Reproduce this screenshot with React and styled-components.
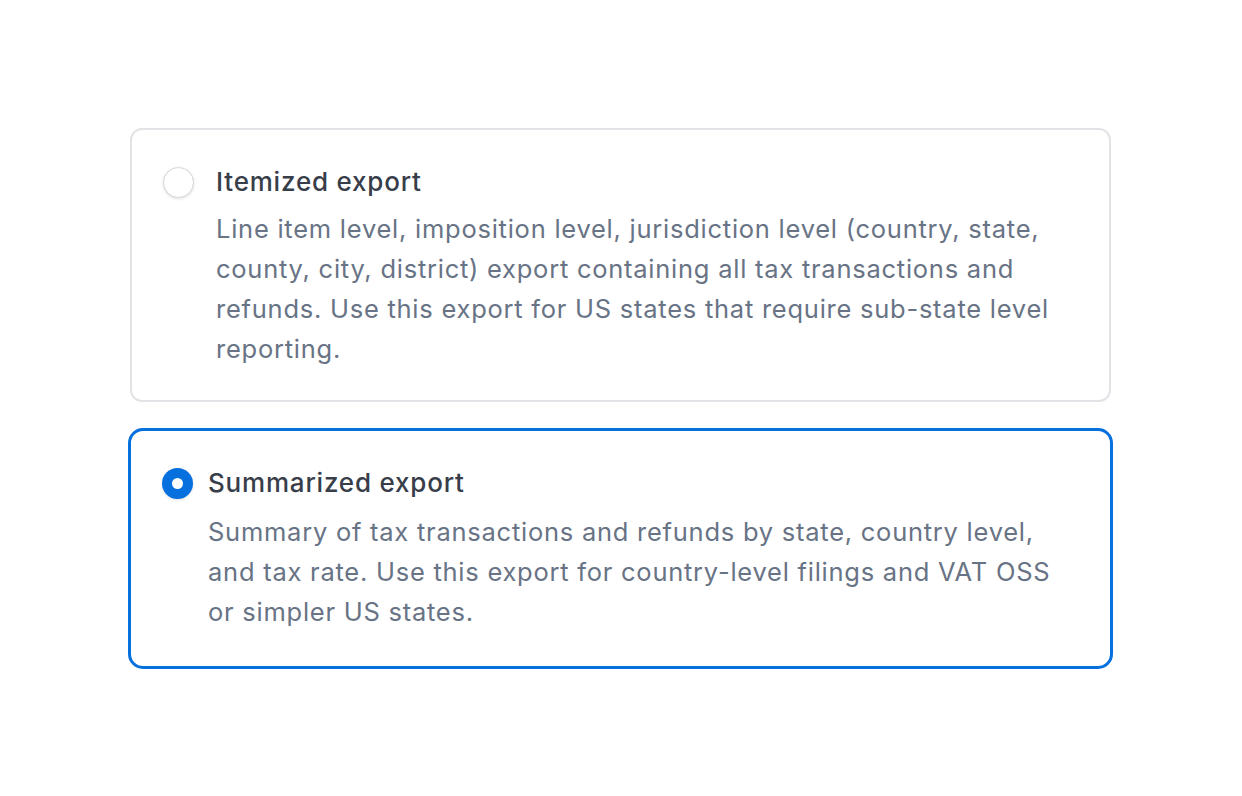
import styled, { createGlobalStyle } from "styled-components";

const Global = createGlobalStyle`
  body {
    margin: 0;
    background: #ffffff;
    font-family: Inter, "Noto Sans", sans-serif;
  }
`;

const Page = styled.main`
  display: flex;
  flex-direction: column;
  gap: 26px;
  padding: 128px 0 0 128px;
  width: 985px;
`;

const Card = styled.label`
  display: flex;
  align-items: flex-start;
  gap: ${(p) => (p.$selected ? "15px" : "22px")};
  margin: ${(p) => (p.$selected ? "0" : "0 2px")};
  padding: ${(p) => (p.$selected ? "32px 31px 34px 31px" : "32px 31px 31px 31px")};
  border: ${(p) => (p.$selected ? "3px solid #0570de" : "2px solid #e2e3e6")};
  border-radius: ${(p) => (p.$selected ? "15px" : "12px")};
  cursor: pointer;
`;

const Radio = styled.span`
  flex: none;
  box-sizing: border-box;
  width: 31px;
  height: 31px;
  margin-top: 5px;
  border-radius: 50%;
  display: flex;
  align-items: center;
  justify-content: center;
  background: ${(p) => (p.$checked ? "#0570de" : "#ffffff")};
  border: ${(p) => (p.$checked ? "none" : "1px solid #d5d7dc")};
  box-shadow: 0 1px 3px rgba(0, 0, 0, 0.12);

  &::after {
    content: "";
    display: ${(p) => (p.$checked ? "block" : "none")};
    width: 11px;
    height: 11px;
    border-radius: 50%;
    background: #ffffff;
  }
`;

const Body = styled.div`
  display: flex;
  flex-direction: column;
  gap: ${(p) => (p.$selected ? "9px" : "7px")};
`;

const Title = styled.div`
  font-size: 26px;
  line-height: 40px;
  font-weight: 500;
  letter-spacing: 0.8px;
  color: #383d4a;
`;

const Desc = styled.p`
  margin: 0;
  font-size: 25.5px;
  line-height: 40px;
  letter-spacing: 0.75px;
  color: #687385;
`;

const options = [
  {
    id: "itemized",
    title: "Itemized export",
    desc: "Line item level, imposition level, jurisdiction level (country, state, county, city, district) export containing all tax transactions and refunds. Use this export for US states that require sub-state level reporting.",
  },
  {
    id: "summarized",
    title: "Summarized export",
    desc: "Summary of tax transactions and refunds by state, country level, and tax rate. Use this export for country-level filings and VAT OSS or simpler US states.",
  },
];

export default function App() {
  const selected = "summarized";
  return (
    <>
      <Global />
      <Page>
        {options.map((o) => (
          <Card key={o.id} $selected={o.id === selected}>
            <Radio $checked={o.id === selected} />
            <Body $selected={o.id === selected}>
              <Title>{o.title}</Title>
              <Desc>{o.desc}</Desc>
            </Body>
          </Card>
        ))}
      </Page>
    </>
  );
}
